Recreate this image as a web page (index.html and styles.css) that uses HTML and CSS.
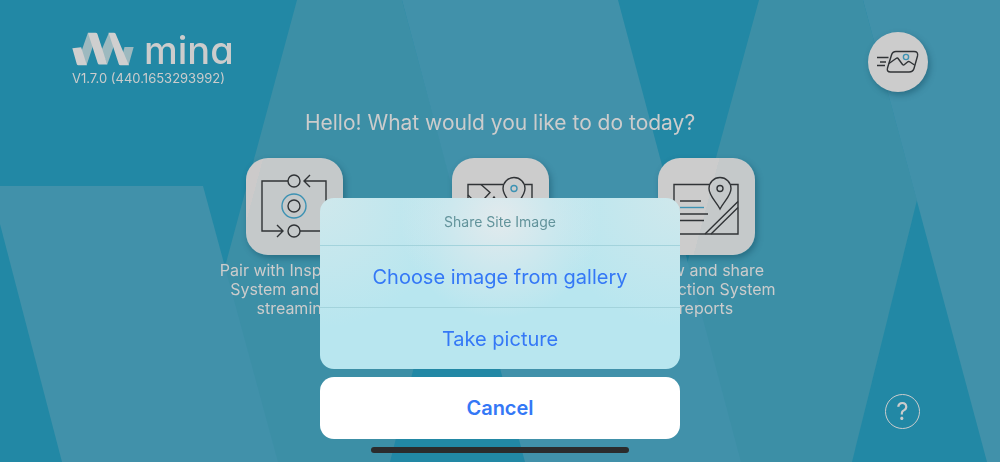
FILE: index.html
```html
<!DOCTYPE html>
<html lang="en">

<head>
    <meta charset="UTF-8">
    <meta name="viewport" content="width=device-width, initial-scale=1.0">
    <title>mina</title>
    <link rel="stylesheet" href="styles.css">
</head>

<body>
    <svg class="backdrop" viewBox="0 0 1000 462" preserveAspectRatio="none" aria-hidden="true">
        <polygon class="mid" points="297,0 402,0 456,200 390,462 276,462 223,263 226,263" />
        <polygon class="mid" points="759,0 863,0 917,200 852,462 739,462 687,264" />
        <polygon class="light" points="0,186 203,186 278,462 62,462 0,224" />
        <polygon class="light" points="402,0 618,0 741,462 525,462" />
        <polygon class="light" points="863,0 1000,0 1000,462 987,462" />
    </svg>

    <div class="page">
        <header>
            <div class="brand">
                <div class="logo">
                    <svg class="mark" viewBox="39 36 183 100" aria-hidden="true">
                        <g class="fold">
                            <polygon points="64,100 70,84 86,38 106,62 82,134" />
                            <polygon points="126,90 148,38 168,62 143,132" />
                            <polygon points="194,80 221,80 206,134 186,110" />
                        </g>
                        <path d="M40 84 L66 81 L83 134 H58 Q54 134 53 130 Z" />
                        <path d="M86 38 H108 Q113 38 114 42 L143 132 H120 Q116 132 115 128 Z" />
                        <path d="M147 38 H162 Q167 38 168 42 L207 134 H182 Q178 134 177 130 Z" />
                    </svg>
                    <span class="name">mina</span>
                </div>
                <p class="version">V1.7.0 (440.1653293992)</p>
            </div>
            <button class="gallery" aria-label="Images">
                <svg class="icon" viewBox="0 0 60 60" aria-hidden="true">
                    <path d="M28 19.5 H46 Q50.500 19.500 49.500 24 L46 36.500 Q45 40 41 40 H22.500 Q18.500 40 19.500 36 L23.500 23 Q24.500 19.500 28 19.500 Z" />
                    <path d="M21 31.500 L28 26.500 Q29.500 25.500 30.500 27 L34.500 32.500 Q35.500 33.500 36.500 32.500 L39.500 30 Q40.500 29 42 30 L46.500 33" />
                    <path d="M9 25.500 H20.500 M12 30 H18 M9 33.500 H17" />
                    <circle class="blue" cx="38" cy="25" r="2.600" />
                </svg>
            </button>
        </header>

        <main>
            <h1>Hello! What would you like to do today?</h1>
            <div class="tiles">
                <button class="tile">
                    <span class="card card-pair">
                        <svg class="icon" viewBox="0 0 97 97" aria-hidden="true">
                            <path d="M42 23 H16 V73 H37 M31 67 L37 73 L31 79 M54 73 H80 V23 H58 M64 17 L58 23 L64 29" />
                            <circle cx="48" cy="23" r="6" />
                            <circle cx="48" cy="73" r="6" />
                            <circle cx="48" cy="48" r="6" />
                            <circle class="blue" cx="48" cy="48" r="12" />
                        </svg>
                    </span>
                    <span class="label">Pair with Inspection<br>System and start<br>streaming</span>
                </button>
                <button class="tile" aria-label="Share site image">
                    <span class="card">
                        <svg class="icon" viewBox="0 0 97 97" aria-hidden="true">
                            <path d="M51 26.500 H16 V76 H80 V26.500 H73" />
                            <path d="M29 26.500 L38 34.500 L32 41 M16 37 L22 43 M40 42 L42 39 L44 42" />
                            <path d="M62 51 C58 43 51 38 51 30.500 A11 11 0 0 1 73 30.500 C73 38 66 43 62 51 Z" />
                            <circle class="blue" cx="62" cy="30.500" r="3" />
                        </svg>
                    </span>
                </button>
                <button class="tile">
                    <span class="card card-reports">
                        <svg class="icon" viewBox="0 0 97 97" aria-hidden="true">
                            <path d="M51 26.500 H16 V76 H80 V26.500 H73" />
                            <path d="M62 51 C58 43 51 38 51 30.500 A11 11 0 0 1 73 30.500 C73 38 66 43 62 51 Z" />
                            <circle cx="62" cy="30.500" r="3" />
                            <path d="M22 43 H43 M22 56 H50 M22 62.500 H46 M47 76 L80 43.500 M53 76 L80 49.500" />
                            <path class="blue" d="M22 49.500 H46" />
                        </svg>
                    </span>
                    <span class="label">View and share<br>Inspection System<br>reports</span>
                </button>
            </div>
        </main>

        <footer>
            <button class="help">?</button>
        </footer>
    </div>

    <div class="overlay">
        <div class="sheet" role="dialog" aria-labelledby="sheet-title">
            <div class="options">
                <h2 id="sheet-title">Share Site Image</h2>
                <button>Choose image from gallery</button>
                <button>Take picture</button>
            </div>
            <button class="cancel">Cancel</button>
        </div>
        <div class="home-bar"></div>
    </div>
</body>

</html>
```
FILE: styles.css
```css
* {
    box-sizing: border-box;
}

body {
    margin: 0;
    background: #2288a5;
    color: #cccccc;
    font-family: Inter, "Liberation Sans", sans-serif;
}

button {
    margin: 0;
    padding: 0;
    border: none;
    background: none;
    color: inherit;
    font: inherit;
    cursor: pointer;
}

h1, h2, p {
    margin: 0;
    font-weight: 400;
}

/* background stripes */
.backdrop {
    position: fixed;
    top: 0;
    left: 0;
    width: 100%;
    height: 100%;
}

.backdrop .light {
    fill: #4191aa;
}

.backdrop .mid {
    fill: #3c8fa6;
}

.page {
    position: relative;
    display: flex;
    flex-direction: column;
    min-height: 100vh;
}

header {
    display: flex;
    justify-content: space-between;
    align-items: flex-start;
    padding: 32px 72px 0;
}

.logo {
    display: flex;
    align-items: flex-start;
    gap: 10px;
    height: 34px;
}

.mark {
    width: 62px;
    height: 34px;
    fill: #cfcfcf;
}

.mark .fold {
    fill: #9db9bf;
}

.name {
    font-size: 38px;
    line-height: 36px;
    font-weight: 500;
    font-feature-settings: "cv11";
}

.version {
    margin-top: 4px;
    font-size: 13px;
    line-height: 16px;
}

.icon {
    display: block;
    width: 100%;
    height: 100%;
    fill: none;
    stroke: #303336;
    stroke-width: 1.4;
}

.icon .blue {
    stroke: #3d92b3;
}

.gallery {
    width: 60px;
    height: 60px;
    border-radius: 50%;
    background: #cccccc;
    box-shadow: 2px 3px 6px rgba(0, 50, 70, 0.35);
}

main {
    text-align: center;
}

h1 {
    margin-top: 16px;
    font-size: 21px;
    line-height: 30px;
}

.tiles {
    display: flex;
    justify-content: center;
    align-items: flex-start;
    margin-top: 20px;
}

.tile {
    display: flex;
    flex-direction: column;
    align-items: center;
    width: 206px;
}

.card {
    width: 97px;
    height: 97px;
    border-radius: 22px;
    background: #cccccc;
    box-shadow: 2px 3px 6px rgba(0, 50, 70, 0.35);
}

.card-pair {
    background: linear-gradient(105deg, #cccaca 14%, #c5c9ca 14%);
}

.card-reports {
    background: linear-gradient(105deg, #cccccc 50%, #c5c9ca 50%);
}

.label {
    margin-top: 6px;
    font-size: 16px;
    line-height: 19px;
}

footer {
    display: flex;
    justify-content: flex-end;
    margin-top: auto;
    padding: 0 80px 33px;
}

.help {
    width: 35px;
    height: 35px;
    border: 1px solid #cccccc;
    border-radius: 50%;
    font-size: 24px;
    line-height: 32px;
}

/* action sheet */
.overlay {
    position: fixed;
    left: 0;
    right: 0;
    bottom: 9px;
    display: flex;
    flex-direction: column;
    align-items: center;
}

.sheet {
    width: 360px;
    max-width: 100%;
    color: #3478f6;
    font-size: 20px;
}

.options {
    overflow: hidden;
    border-radius: 14px;
    background:
        radial-gradient(circle at 50% 12%, #e2eaed 0, rgba(226, 234, 237, 0) 100px),
        radial-gradient(circle at 0 0, #cfe8ec 0, rgba(207, 232, 236, 0) 130px),
        radial-gradient(circle at 100% 0, #cfe8ec 0, rgba(207, 232, 236, 0) 130px),
        #b8e6ef;
}

.options h2 {
    color: #62939b;
    font-size: 14px;
    line-height: 47px;
    text-align: center;
}

.options button {
    display: block;
    width: 100%;
    height: 62px;
    border-top: 1px solid #a3d3dc;
}

.cancel {
    width: 100%;
    height: 62px;
    margin-top: 8px;
    border-radius: 14px;
    background: #ffffff;
    font-weight: 600;
}

.home-bar {
    width: 258px;
    height: 6px;
    margin-top: 8px;
    border-radius: 3px;
    background: #2b2b2c;
}
```
